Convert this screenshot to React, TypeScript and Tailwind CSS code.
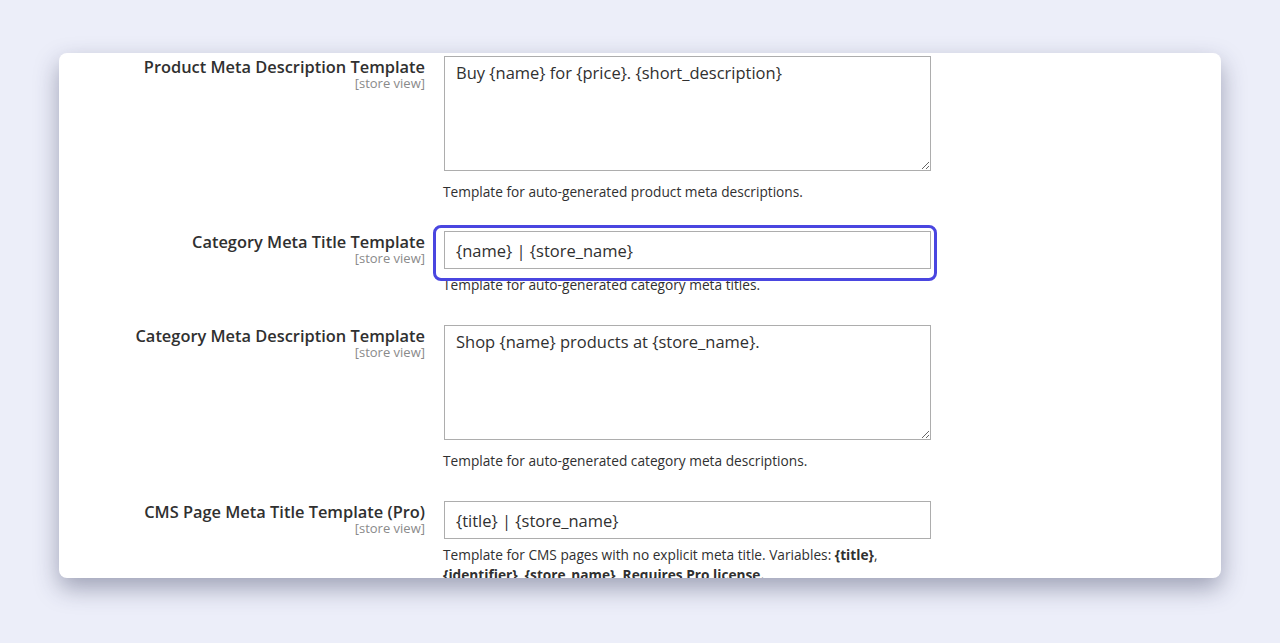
import React from "react";

type Field = {
    label: string;
    value: string;
    multiline?: boolean;
    focused?: boolean;
    note: React.ReactNode;
};

const fields: Field[] = [
    {
        label: "Product Meta Description Template",
        value: "Buy {name} for {price}. {short_description}",
        multiline: true,
        note: "Template for auto-generated product meta descriptions.",
    },
    {
        label: "Category Meta Title Template",
        value: "{name} | {store_name}",
        focused: true,
        note: "Template for auto-generated category meta titles.",
    },
    {
        label: "Category Meta Description Template",
        value: "Shop {name} products at {store_name}.",
        multiline: true,
        note: "Template for auto-generated category meta descriptions.",
    },
    {
        label: "CMS Page Meta Title Template (Pro)",
        value: "{title} | {store_name}",
        note: (
            <>
                Template for CMS pages with no explicit meta title. Variables: <b>{"{title}"}</b>,{" "}
                <b>{"{identifier}"}</b>, <b>{"{store_name}"}</b>. <b>Requires Pro license.</b>
            </>
        ),
    },
];

const FieldRow = ({ field, first }: { field: Field; first?: boolean }) => {
    return (
        <div className={`grid grid-cols-[366px_487px] gap-x-[19px] ${first ? "mb-[29px]" : "mb-[30px]"}`}>
            {/* libellé */}
            <div className="text-right pt-[1px]">
                <div className="text-[16.4px] leading-[19px] font-semibold text-[#303030]">{field.label}</div>
                <div className="text-[13px] leading-[14px] text-[#8a8a8a]">[store view]</div>
            </div>

            {/* champ */}
            <div>
                {field.multiline ? (
                    <textarea
                        readOnly
                        value={field.value}
                        className="block w-full h-[115px] border border-[#adadad] bg-white px-[11px] pt-[5px] text-[16.5px] leading-[22px] text-[#303030] outline-none resize-y"
                    />
                ) : (
                    <div className="relative">
                        <input
                            readOnly
                            value={field.value}
                            className="block w-full h-[38px] border border-[#adadad] bg-white px-[11px] text-[16.5px] text-[#303030] outline-none"
                        />
                        {field.focused && (
                            <div className="absolute -left-[11px] -right-[6px] -top-[6px] -bottom-[12px] rounded-[8px] border-[3px] border-[#4a46e0] pointer-events-none" />
                        )}
                    </div>
                )}
                <p
                    className={`text-[13.7px] leading-[20px] text-[#303030] -ml-[1px] ${
                        field.multiline ? "mt-[11px]" : "mt-[6px]"
                    }`}
                >
                    {field.note}
                </p>
            </div>
        </div>
    );
};

const App = () => {
    return (
        <div
            className="min-h-screen bg-[#eceef9] pt-[53px] px-[59px]"
            style={{ fontFamily: '"Open Sans", "Noto Sans", sans-serif' }}
        >
            <div className="h-[525px] overflow-hidden rounded-[8px] bg-white shadow-[0_10px_24px_rgba(40,44,80,0.4)]">
                <div className="pt-[3px]">
                    {fields.map((f, i) => (
                        <FieldRow key={f.label} field={f} first={i === 0} />
                    ))}
                </div>
            </div>
        </div>
    );
};

export default App;
